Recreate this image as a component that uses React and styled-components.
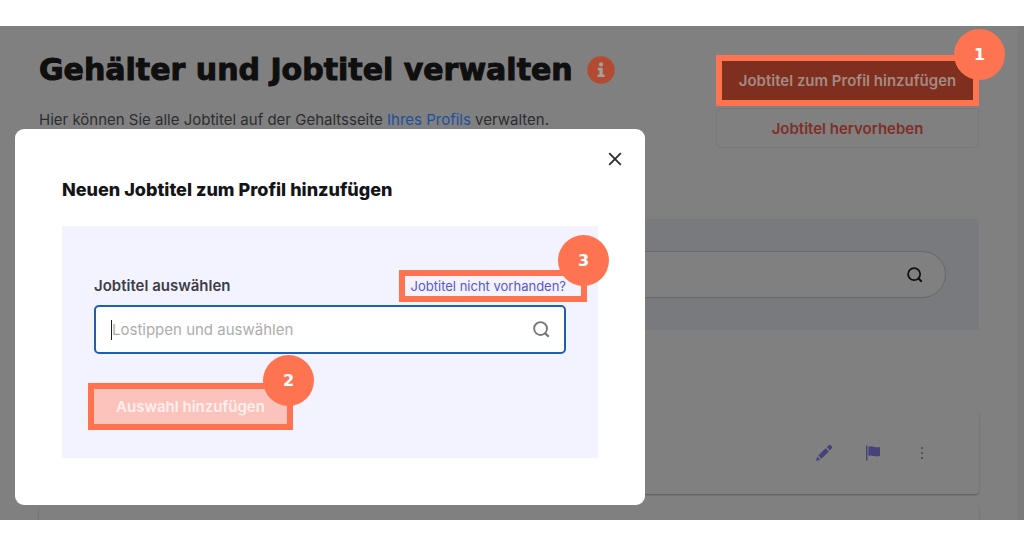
import React from "react";
import styled, { createGlobalStyle } from "styled-components";

const GlobalStyle = createGlobalStyle`
  *, *::before, *::after { box-sizing: border-box; }
  body {
    margin: 0;
    background: #fff;
    font-family: Inter, "Liberation Sans", sans-serif;
  }
  h1, h2, p { margin: 0; }
  button, input { font: inherit; }
`;

const coral = "#ff7450";

const Frame = styled.main`
  min-height: 100vh;
  padding: 26px 0;
`;

const Stage = styled.div`
  position: relative;
  height: calc(100vh - 52px);
  overflow: hidden;
  background: #808080;
  border-right: 6px solid #7b7b7b;
`;

const Page = styled.div`
  padding: 29px 39px 0 39px;
`;

const Header = styled.header`
  display: flex;
  justify-content: space-between;
  margin-bottom: 71px;
`;

const TitleRow = styled.div`
  display: flex;
  align-items: center;
  gap: 14px;
  height: 30px;
  margin-bottom: 23px;
`;

const Title = styled.h1`
  font: 700 30px/30px "DejaVu Sans", sans-serif;
  color: #0f0f0f;
  white-space: nowrap;
  -webkit-text-stroke: 1px #0f0f0f;
`;

const Intro = styled.p`
  font-size: 15px;
  line-height: 24px;
  color: #2d2d30;
`;

const IntroLink = styled.a`
  color: #1f4f9c;
  text-decoration: none;
`;

const Actions = styled.div`
  display: flex;
  flex-direction: column;
  gap: 2px;
  width: 263px;
`;

const ActionButton = styled.button`
  display: block;
  width: 100%;
  height: ${(p) => (p.$primary ? 51 : 40)}px;
  border: 1px solid ${(p) => (p.$primary ? "#7f2f1e" : "#787878")};
  border-radius: 4px;
  background: ${(p) => (p.$primary ? "#7f2f1e" : "#808080")};
  color: ${(p) => (p.$primary ? "#a58a84" : "#7f2f26")};
  font-size: 15px;
  font-weight: 600;
`;

const Highlight = styled.div`
  position: relative;
  width: ${(p) => (p.$fit ? "fit-content" : "auto")};
`;

const Outline = styled.span`
  position: absolute;
  inset: ${(p) => p.$inset};
  border: 6px solid ${coral};
  pointer-events: none;
`;

const Step = styled.span`
  position: absolute;
  top: ${(p) => p.$top};
  right: ${(p) => p.$right};
  display: grid;
  place-items: center;
  width: 51px;
  height: 51px;
  border-radius: 50%;
  background: ${coral};
  color: #fff;
  font: 700 16px/20px "DejaVu Sans", sans-serif;
`;

const FilterPanel = styled.section`
  padding: 32px 33px;
  margin-bottom: 82px;
  background: #797a7e;
`;

const FilterField = styled.label`
  display: flex;
  align-items: center;
  height: 47px;
  padding: 0 22px;
  border: 1px solid #68686a;
  border-radius: 24px;
  background: #808080;
`;

const FilterInput = styled.input`
  flex: 1;
  min-width: 0;
  border: 0;
  outline: 0;
  background: transparent;
`;

const Cards = styled.div`
  display: grid;
  gap: 11px;
`;

const Card = styled.article`
  display: flex;
  justify-content: flex-end;
  align-items: center;
  gap: 29px;
  height: 82px;
  padding: 0 47px;
  border-radius: 4px;
  background: #808080;
  box-shadow: 0 1px 2px #5c5c5c;
`;

const IconButton = styled.button`
  display: grid;
  place-items: center;
  width: 20px;
  height: 20px;
  padding: 0;
  border: 0;
  background: none;
  color: ${(p) => p.$color || "#47427c"};
`;

const Dialog = styled.section`
  position: absolute;
  top: 103px;
  left: 15px;
  width: 630px;
  max-width: calc(100% - 30px);
  padding: 20px 47px 47px;
  border-radius: 9px;
  background: #fff;
`;

const DialogBar = styled.div`
  display: flex;
  justify-content: flex-end;
  margin-right: -27px;
`;

const DialogTitle = styled.h2`
  margin: 8px 0 24px;
  font-size: 18px;
  line-height: 25px;
  font-weight: 800;
  color: #151517;
`;

const FormPanel = styled.form`
  padding: 48px 32px 34px;
  background: #f3f3ff;
`;

const FieldHead = styled.div`
  display: flex;
  justify-content: space-between;
  align-items: center;
  height: 24px;
  margin-bottom: 7px;
`;

const FieldLabel = styled.label`
  font-size: 15px;
  font-weight: 600;
  line-height: 24px;
  color: #3d3d47;
`;

const MissingLink = styled.a`
  display: block;
  font-size: 13px;
  line-height: 24px;
  color: #5a55d0;
  text-decoration: none;
`;

const SearchBox = styled.div`
  display: flex;
  align-items: center;
  height: 49px;
  padding: 0 14px 0 15px;
  margin-bottom: 35px;
  border: 2px solid #1f5fb0;
  border-radius: 5px;
  background: #fff;
`;

const Caret = styled.span`
  width: 1px;
  height: 20px;
  background: #222;
`;

const SearchInput = styled.input`
  flex: 1;
  min-width: 0;
  padding: 0;
  border: 0;
  outline: 0;
  background: transparent;
  font-size: 15px;
  &::placeholder { color: #adadad; opacity: 1; }
`;

const SubmitButton = styled.button`
  display: block;
  width: 193px;
  height: 35px;
  padding: 0;
  border: 0;
  background: #fbc3bb;
  color: #fff0ee;
  font-size: 15px;
  font-weight: 600;
`;

const SearchIcon = ({ size, color }) => (
  <svg width={size} height={size} viewBox="0 0 18 18" fill="none" stroke={color} strokeWidth="2" aria-hidden="true">
    <circle cx="8" cy="8" r="6.8" />
    <path d="M12.4 12.4l4.2 4.2" strokeWidth="2.4" />
  </svg>
);

const InfoIcon = () => (
  <svg width="28" height="28" viewBox="0 0 28 28" role="img" aria-label="Info">
    <circle cx="14" cy="14" r="13.7" fill="#b34b32" />
    <circle cx="14" cy="8.4" r="2.1" fill="#a5a09e" />
    <path d="M10.8 11.8h4.9v6.8h1.7v2.4h-6.8v-2.4h1.8v-4.4h-1.6z" fill="#a5a09e" />
  </svg>
);

const PencilIcon = () => (
  <svg width="18" height="18" viewBox="0 0 18 18" fill="currentColor" aria-hidden="true">
    <path d="M1 17l1.2-4.4 3.2 3.2z" />
    <path d="M3.2 11.5l7.4-7.3 3.3 3.3-7.4 7.3z" />
    <path d="M11.7 3.2l1.8-1.8a1.8 1.8 0 0 1 2.6 0l.6.7a1.8 1.8 0 0 1 0 2.5L15 6.4z" />
  </svg>
);

const FlagIcon = () => (
  <svg width="16" height="16" viewBox="0 0 16 16" fill="currentColor" aria-hidden="true">
    <path d="M1 .5h1.4v15H1z" />
    <path d="M3.4 1.7c2-.9 3.7-.6 5.4 0s3.8.8 6.2.4v9c-2.4.6-4.4.4-6.2-.1s-3.4-.8-5.4 0z" />
  </svg>
);

const DotsIcon = () => (
  <svg width="4" height="14" viewBox="0 0 4 14" fill="currentColor" aria-hidden="true">
    <circle cx="2" cy="2" r="1.1" />
    <circle cx="2" cy="7" r="1.1" />
    <circle cx="2" cy="12" r="1.1" />
  </svg>
);

const CloseIcon = () => (
  <svg width="14" height="14" viewBox="0 0 14 14" stroke="#2b2b2b" strokeWidth="1.8" aria-hidden="true">
    <path d="M1.2 1.2l11.6 11.6M12.8 1.2L1.2 12.8" />
  </svg>
);

export default function App() {
  return (
    <>
      <GlobalStyle />
      <Frame>
        <Stage>
          <Page>
            <Header>
              <div>
                <TitleRow>
                  <Title>Gehälter und Jobtitel verwalten</Title>
                  <InfoIcon />
                </TitleRow>
                <Intro>
                  Hier können Sie alle Jobtitel auf der Gehaltsseite <IntroLink href="#profil">Ihres Profils</IntroLink> verwalten.
                </Intro>
              </div>
              <Actions>
                <Highlight>
                  <ActionButton $primary type="button">Jobtitel zum Profil hinzufügen</ActionButton>
                  <Outline $inset="0" />
                  <Step $top="-26px" $right="-26px">1</Step>
                </Highlight>
                <ActionButton type="button">Jobtitel hervorheben</ActionButton>
              </Actions>
            </Header>
            <FilterPanel>
              <FilterField>
                <FilterInput type="text" aria-label="Suche" />
                <SearchIcon size={16} color="#111" />
              </FilterField>
            </FilterPanel>
            <Cards>
              <Card>
                <IconButton type="button" aria-label="Bearbeiten"><PencilIcon /></IconButton>
                <IconButton type="button" aria-label="Markieren"><FlagIcon /></IconButton>
                <IconButton type="button" aria-label="Mehr" $color="#4c4a5c"><DotsIcon /></IconButton>
              </Card>
              <Card />
            </Cards>
          </Page>
          <Dialog role="dialog" aria-labelledby="dialog-title">
            <DialogBar>
              <IconButton type="button" aria-label="Schließen"><CloseIcon /></IconButton>
            </DialogBar>
            <DialogTitle id="dialog-title">Neuen Jobtitel zum Profil hinzufügen</DialogTitle>
            <FormPanel>
              <FieldHead>
                <FieldLabel htmlFor="jobtitel">Jobtitel auswählen</FieldLabel>
                <Highlight $fit>
                  <MissingLink href="#fehlt">Jobtitel nicht vorhanden?</MissingLink>
                  <Outline $inset="-4px -21px -4px -12px" />
                  <Step $top="-39px" $right="-43px">3</Step>
                </Highlight>
              </FieldHead>
              <SearchBox>
                <Caret />
                <SearchInput id="jobtitel" type="text" placeholder="Lostippen und auswählen" />
                <SearchIcon size={17} color="#777" />
              </SearchBox>
              <Highlight $fit>
                <SubmitButton type="button">Auswahl hinzufügen</SubmitButton>
                <Outline $inset="-6px" />
                <Step $top="-34px" $right="-27px">2</Step>
              </Highlight>
            </FormPanel>
          </Dialog>
        </Stage>
      </Frame>
    </>
  );
}
